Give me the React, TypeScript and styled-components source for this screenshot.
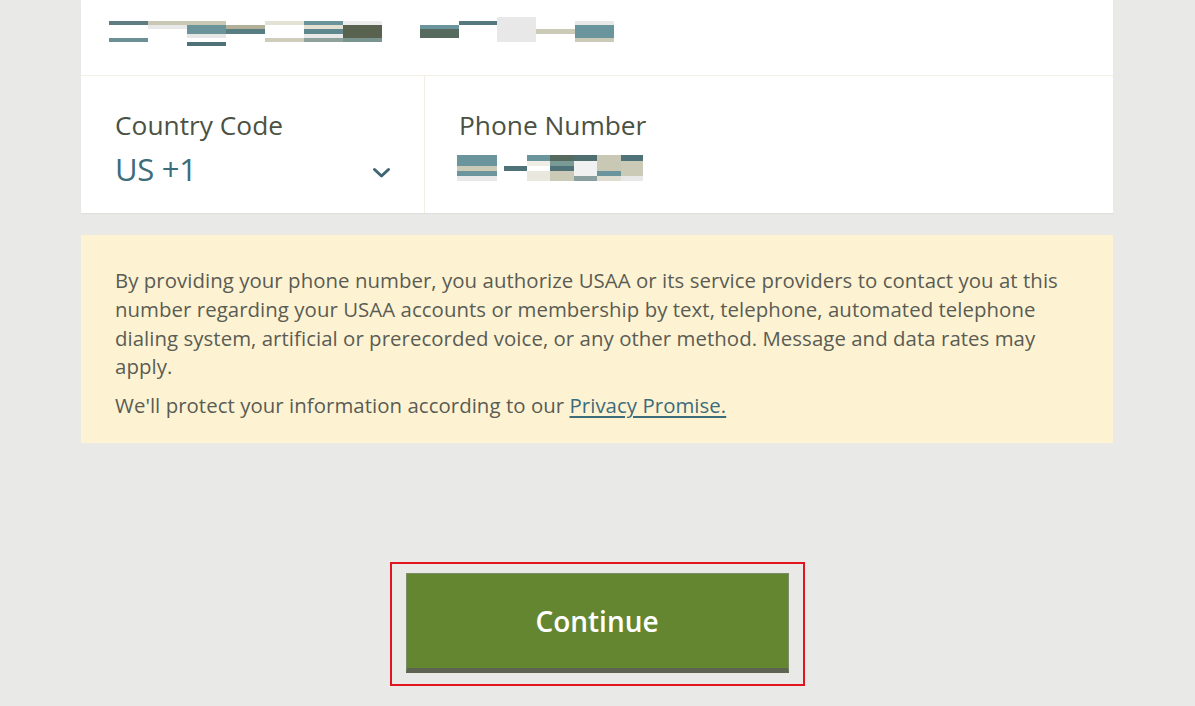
import React from "react";
import styled, { createGlobalStyle } from "styled-components";

const GlobalStyle = createGlobalStyle`
  html, body {
    margin: 0;
    padding: 0;
    background: #e9e9e8;
  }
  body {
    font-family: "Open Sans", "Noto Sans", Arial, sans-serif;
  }
`;

const Page = styled.div`
  width: 1195px;
  height: 706px;
  overflow: hidden;
  padding-left: 81px;
  box-sizing: border-box;
`;

const Column = styled.div`
  width: 1032px;
  display: flex;
  flex-direction: column;
`;

const Card = styled.div`
  background: #ffffff;
  box-shadow: 0 1px 1px rgba(0, 0, 0, 0.04);
`;

const TopRow = styled.div`
  height: 75px;
  border-bottom: 1px solid #f3f1e4;
`;

const RedactSvg = styled.svg`
  display: block;
`;

const FieldsRow = styled.div`
  display: grid;
  grid-template-columns: 343px 1fr;
  height: 137px;
`;

const Field = styled.div<{ $divider?: boolean }>`
  padding: 33px 0 0 34px;
  border-left: ${(p) => (p.$divider ? "1px solid #f1efe3" : "none")};
`;

const Label = styled.div`
  font-size: 26.3px;
  line-height: 32px;
  color: #4b5243;
`;

const SelectValue = styled.div`
  display: flex;
  align-items: center;
  justify-content: space-between;
  padding-right: 33px;
  margin-top: 8px;
  font-size: 31px;
  line-height: 40px;
  color: #3d6c7b;
  letter-spacing: -0.3px;
`;

const Chevron = styled.svg`
  display: block;
  margin-top: 8px;
`;

const Notice = styled.div`
  margin-top: 22px;
  height: 208px;
  box-sizing: border-box;
  background: #fdf3d3;
  padding: 31px 40px 0 34px;
  color: #5a5c53;
  font-size: 20.4px;
  line-height: 28.8px;
  letter-spacing: 0.05px;
`;

const Para = styled.p<{ $gap?: number }>`
  margin: ${(p) => p.$gap ?? 0}px 0 0 0;
`;

const Link = styled.a`
  color: #3d6c7b;
  text-decoration: underline;
  text-underline-offset: 3px;
`;

const ButtonArea = styled.div`
  display: flex;
  justify-content: center;
  margin-top: 119px;
`;

const Highlight = styled.div`
  border: 2px solid #e3141f;
  padding: 9px 14px 11px 14px;
`;

const ContinueButton = styled.button`
  width: 383px;
  height: 100px;
  box-sizing: border-box;
  background: #658630;
  border: 1px solid #7c8c66;
  border-bottom: 5px solid #5d6552;
  color: #ffffff;
  font-family: "Open Sans", "Noto Sans", Arial, sans-serif;
  font-size: 28px;
  font-weight: 600;
  padding: 0;
  cursor: pointer;
`;

type Cell = [number, number, number, number, string];

const topCells: Cell[] = [
  [109, 21, 39, 4, "#5d7d80"],
  [109, 38, 39, 4, "#6a8f95"],
  [148, 21, 39, 4, "#c8c8b4"],
  [148, 25, 39, 4, "#e8e8e8"],
  [187, 21, 39, 4, "#c8c8b4"],
  [187, 25, 39, 9, "#6a939a"],
  [187, 34, 39, 4, "#e6e6e6"],
  [187, 42, 39, 4, "#4e7278"],
  [226, 25, 39, 4, "#b3b09a"],
  [226, 29, 39, 5, "#587d82"],
  [265, 21, 39, 4, "#e4e2d4"],
  [265, 38, 39, 4, "#cfcdb9"],
  [304, 21, 39, 4, "#6a939a"],
  [304, 25, 39, 4, "#e3e0d3"],
  [304, 29, 39, 5, "#5f878e"],
  [304, 34, 39, 4, "#e9e9e9"],
  [304, 38, 39, 4, "#8ea19a"],
  [343, 21, 39, 4, "#ececec"],
  [343, 25, 39, 13, "#59624e"],
  [343, 38, 39, 4, "#7a9590"],
  [420, 25, 39, 4, "#6b959c"],
  [420, 29, 39, 9, "#566b5e"],
  [459, 21, 39, 4, "#56797f"],
  [497, 17, 39, 25, "#e8e8e8"],
  [536, 29, 39, 5, "#cbcab6"],
  [575, 21, 39, 4, "#e8e8e8"],
  [575, 25, 39, 13, "#6a959c"],
  [575, 38, 39, 4, "#cbcab6"],
];

const phoneCells: Cell[] = [
  [457, 155, 40, 11, "#6a959c"],
  [457, 166, 40, 5, "#cbcab6"],
  [457, 171, 40, 5, "#6a959c"],
  [457, 176, 40, 5, "#e8e8e8"],
  [504, 166, 23, 5, "#4e7278"],
  [527, 155, 23, 6, "#6a959c"],
  [527, 161, 23, 5, "#efeee6"],
  [527, 171, 23, 10, "#e9e8df"],
  [550, 155, 24, 6, "#56695f"],
  [550, 161, 24, 5, "#7a9a96"],
  [550, 166, 24, 5, "#4e7278"],
  [550, 171, 24, 10, "#cbcab6"],
  [574, 155, 23, 6, "#4f6e70"],
  [574, 161, 23, 15, "#f1f1f1"],
  [574, 176, 23, 5, "#8aa0a0"],
  [597, 155, 24, 16, "#c9c8b4"],
  [597, 171, 24, 5, "#6a959c"],
  [597, 176, 24, 5, "#deddd0"],
  [621, 155, 22, 6, "#4e7278"],
  [621, 161, 22, 15, "#cbcab6"],
  [621, 176, 22, 5, "#e8e8e8"],
];

function Redaction({
  cells,
  ox,
  oy,
  w,
  h,
}: {
  cells: Cell[];
  ox: number;
  oy: number;
  w: number;
  h: number;
}) {
  return (
    <RedactSvg width={w} height={h} viewBox={`0 0 ${w} ${h}`}>
      {cells.map(([x, y, cw, ch, c], i) => (
        <rect key={i} x={x - ox} y={y - oy} width={cw} height={ch} fill={c} />
      ))}
    </RedactSvg>
  );
}

const TopRedactWrap = styled.div`
  padding: 17px 0 0 28px;
`;

const PhoneRedactWrap = styled.div`
  margin-top: 14px;
  margin-left: -2px;
`;

export default function App() {
  return (
    <>
      <GlobalStyle />
      <Page>
        <Column>
          <Card>
            <TopRow>
              <TopRedactWrap>
                <Redaction cells={topCells} ox={109} oy={17} w={510} h={30} />
              </TopRedactWrap>
            </TopRow>
            <FieldsRow>
              <Field>
                <Label>Country Code</Label>
                <SelectValue>
                  <span>US +1</span>
                  <Chevron width="19" height="12" viewBox="0 0 19 12">
                    <path
                      d="M2.5 2.5 L9.5 9 L16.5 2.5"
                      fill="none"
                      stroke="#3f6673"
                      strokeWidth="3"
                      strokeLinecap="round"
                      strokeLinejoin="round"
                    />
                  </Chevron>
                </SelectValue>
              </Field>
              <Field $divider>
                <Label>Phone Number</Label>
                <PhoneRedactWrap>
                  <Redaction cells={phoneCells} ox={457} oy={155} w={190} h={26} />
                </PhoneRedactWrap>
              </Field>
            </FieldsRow>
          </Card>
          <Notice>
            <Para>
              By providing your phone number, you authorize USAA or its service providers to contact you at this
              number regarding your USAA accounts or membership by text, telephone, automated telephone
              dialing system, artificial or prerecorded voice, or any other method. Message and data rates may
              apply.
            </Para>
            <Para $gap={10}>
              We'll protect your information according to our <Link href="#">Privacy Promise.</Link>
            </Para>
          </Notice>
          <ButtonArea>
            <Highlight>
              <ContinueButton>Continue</ContinueButton>
            </Highlight>
          </ButtonArea>
        </Column>
      </Page>
    </>
  );
}
